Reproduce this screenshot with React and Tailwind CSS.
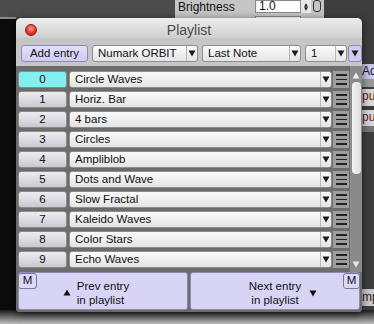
import React from 'react';

const entries = [
  'Circle Waves',
  'Horiz. Bar',
  '4 bars',
  'Circles',
  'Ampliblob',
  'Dots and Wave',
  'Slow Fractal',
  'Kaleido Waves',
  'Color Stars',
  'Echo Waves',
];

const Arrow = ({ up = false, className = '' }) => (
  <svg width="8" height="7" viewBox="0 0 8 7" className={className}>
    {up ? <path d="M4 0.5 L7.5 6.5 L0.5 6.5 Z" fill="currentColor" /> : <path d="M0.5 0.5 L7.5 0.5 L4 6.5 Z" fill="currentColor" />}
  </svg>
);

const Select = ({ label, className = '' }) => (
  <div className={`flex h-[17px] items-center rounded-[3px] border border-[#8e8e8e] bg-gradient-to-b from-[#fbfbfb] to-[#e4e4e4] ${className}`}>
    <span className="flex-1 truncate pl-[5px] text-[#111]">{label}</span>
    <div className="flex h-full w-[11px] items-center justify-center border-l border-[#b8b8b8]">
      <Arrow className="text-[#1a1a1a]" />
    </div>
  </div>
);

const Hamburger = () => (
  <div className="flex h-[17px] w-[16px] flex-col items-center justify-center gap-[3px] bg-[#9d9d9d]">
    <div className="h-[1.5px] w-[11px] bg-[#222]" />
    <div className="h-[1.5px] w-[11px] bg-[#222]" />
    <div className="h-[1.5px] w-[11px] bg-[#222]" />
  </div>
);

export default function App() {
  return (
    <div
      className="relative h-[324px] w-[374px] overflow-hidden bg-[#3e3e3e] text-[11.5px]"
      style={{ fontFamily: '"Liberation Sans", Arial, sans-serif' }}
    >
      {/* desktop behind */}
      <div className="absolute left-0 top-0 h-[18px] w-[175px] bg-[#4b4b4b]" />
      <div className="absolute left-0 top-[17px] h-[2px] w-[16px] bg-[#8a8a8a]" />
      <div className="absolute left-0 top-[19px] h-[293px] w-[16px] bg-[#0b0b0b]" />
      <div className="absolute left-0 top-[310px] h-[14px] w-[374px] bg-gradient-to-b from-[#1e1e1e] via-[#6e6e6e] to-[#bdbdbd]" />

      {/* inspector window behind */}
      <div className="absolute left-[175px] top-0 h-[19px] w-[149px] overflow-hidden bg-[#c5c5c5]">
        <div className="absolute left-[3px] top-[-2px] text-[12px] text-[#111]">Brightness</div>
        <div className="absolute left-[80px] top-[0px] h-[13px] w-[46px] border border-[#8a8a8a] bg-white pl-[3px] text-[12px] leading-[11px] text-[#111]">1.0</div>
        <div className="absolute left-[126px] top-[0px] flex h-[13px] w-[10px] flex-col items-center justify-center bg-[#e8e8e8] text-[#222]">
          <Arrow up className="h-[4px] w-[6px]" />
          <Arrow className="h-[4px] w-[6px]" />
        </div>
        <div className="absolute left-[138px] top-[0px] h-[12px] w-[8px] rounded-[3px] border-[1.5px] border-[#333]" />
        <div className="absolute left-[80px] top-[16px] h-[13px] w-[46px] border border-[#8a8a8a] bg-white" />
      </div>

      {/* right strip behind */}
      <div className="absolute left-[362px] top-[64px] h-[15px] w-[12px] overflow-hidden bg-[#c9c6ea] text-[12px] leading-[15px] text-[#222]">Ad</div>
      <div className="absolute left-[362px] top-[79px] h-[8px] w-[12px] bg-[#9a9a9a]" />
      <div className="absolute left-[362px] top-[89px] h-[17px] w-[12px] bg-[#d8d8d8] text-[12px] leading-[15px] text-[#5a1a1a]">pu</div>
      <div className="absolute left-[362px] top-[110px] h-[16px] w-[12px] bg-[#d8d8d8] text-[12px] leading-[15px] text-[#5a1a1a]">pu</div>
      <div className="absolute left-[362px] top-[126px] h-[6px] w-[12px] bg-[#777]" />
      <div className="absolute left-[362px] top-[289px] h-[17px] w-[12px] overflow-hidden bg-[#c9c9c9] text-[12px] leading-[17px] text-[#222]">mp</div>

      {/* Playlist window */}
      <div className="absolute left-[16px] top-[18px] flex h-[294px] w-[346px] flex-col overflow-hidden rounded-t-[5px] rounded-b-[4px] bg-[#7a7a7a] shadow-[0_2px_8px_rgba(0,0,0,0.6)]">
        <div className="relative flex h-[20px] items-center justify-center bg-gradient-to-b from-[#ededed] to-[#cfcfcf]">
          <div className="absolute left-[9px] top-[6px] h-[12px] w-[12px] rounded-full border border-[#8c2020] bg-[radial-gradient(circle_at_50%_35%,#ff9a90,#e0302a_60%,#a81a16)]" />
          <span className="pt-[4px] text-[14px] text-[#4a4a4a]">Playlist</span>
        </div>
        <div className="flex h-[28px] items-center gap-[4px] bg-[#c6c6c6] pl-[5px] pt-[3px]">
          <button className="flex h-[17px] w-[67px] items-center justify-center rounded-[3px] border border-[#8d8bb0] bg-gradient-to-b from-[#e2dffa] to-[#cfcbf3] text-[#111]">
            Add entry
          </button>
          <Select label="Numark ORBIT" className="w-[106px]" />
          <Select label="Last Note" className="w-[99px]" />
          <Select label="1" className="w-[42px]" />
          <div className="-ml-[3px] flex h-[17px] w-[14px] items-center justify-center rounded-[3px] border border-[#8d8bb0] bg-[#cfcbf3]">
            <Arrow className="text-[#1a1a1a]" />
          </div>
        </div>

        <div className="flex flex-1 bg-[#6c6c6c]">
          <div className="flex flex-col gap-[3px] pl-[2px] pt-[5px]">
            {entries.map((name, i) => (
              <div key={i} className="flex items-center gap-[2px]">
                <div
                  className={`flex h-[17px] w-[49px] items-center justify-center rounded-[3px] border border-[#8a8a8a] text-[#111] ${
                    i === 0 ? 'bg-[#84efef]' : 'bg-gradient-to-b from-[#ededf3] to-[#c9c9d1]'
                  }`}
                >
                  {i}
                </div>
                <Select label={name} className="w-[263px]" />
                <div className="ml-[-1px]">
                  <Hamburger />
                </div>
              </div>
            ))}
          </div>
          <div className="ml-[1px] flex w-[12px] flex-col items-center bg-[#8a8a8a] pb-[4px] pt-[6px]">
            <Arrow up className="text-[#f2f2f2]" />
            <div className="mt-[3px] h-[92px] w-[9px] rounded-[4px] bg-gradient-to-r from-[#f4f4f4] to-[#dcdcdc]" />
            <div className="flex-1" />
            <Arrow className="text-[#e8e8e8]" />
          </div>
        </div>

        <div className="relative flex h-[40px] gap-[2px] bg-[#6c6c6c] px-[2px] pb-[2px]">
          <button className="flex flex-1 items-center justify-center rounded-[3px] border border-[#8d8bb0] bg-[#d8d4f6] pt-[4px] text-[#111]">
            <span className="relative text-left leading-[14px]">
              <Arrow up className="absolute left-[-14px] top-[10px] text-[#111]" />
              Prev entry
              <br />
              in playlist
            </span>
          </button>
          <button className="flex flex-1 items-center justify-center rounded-[3px] border border-[#8d8bb0] bg-[#d8d4f6] pt-[4px] text-[#111]">
            <span className="relative text-center leading-[14px]">
              Next entry
              <br />
              in playlist
              <Arrow className="absolute right-[-16px] top-[11px] text-[#111]" />
            </span>
          </button>
          <div className="absolute left-[2px] top-[1px] flex h-[16px] w-[19px] items-center justify-center rounded-[3px] border border-[#7a78a0] bg-[#dcd8f8] text-[#111]">
            M
          </div>
          <div className="absolute left-[327px] top-[1px] flex h-[16px] w-[17px] items-center justify-center rounded-[3px] border border-[#7a78a0] bg-[#dcd8f8] text-[#111]">
            M
          </div>
        </div>
      </div>
    </div>
  );
}
